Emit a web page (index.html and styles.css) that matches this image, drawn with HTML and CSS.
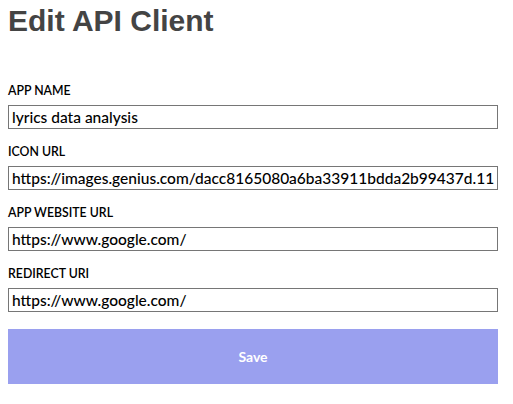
FILE: index.html
```html
<!DOCTYPE html>
<html>
<head>
<meta charset="utf-8">
<link rel="stylesheet" href="styles.css">
</head>
<body>
<h1 class="title">Edit API Client</h1>
<form class="form">
  <div class="field">
    <label class="label">APP NAME</label>
    <input class="input" type="text" value="lyrics data analysis">
  </div>
  <div class="field">
    <label class="label">ICON URL</label>
    <input class="input" type="text" value="https://images.genius.com/dacc8165080a6ba33911bdda2b99437d.1180x1180x1.png">
  </div>
  <div class="field">
    <label class="label">APP WEBSITE URL</label>
    <input class="input" type="text" value="https://www.google.com/">
  </div>
  <div class="field">
    <label class="label">REDIRECT URI</label>
    <input class="input" type="text" value="https://www.google.com/">
  </div>
  <button class="save" type="button">Save</button>
</form>
</body>
</html>
```
FILE: styles.css
```css
html, body {
  margin: 0;
  padding: 0;
  background: #fff;
}
body {
  padding: 8px;
  font-family: "Lato", "Liberation Sans", sans-serif;
  color: #000;
}
.title {
  margin: -2px 0 0;
  font-family: "Liberation Sans", Arial, sans-serif;
  font-weight: bold;
  font-size: 30px;
  line-height: 30px;
  color: #444;
}
.form {
  margin-top: 48px;
  display: flex;
  flex-direction: column;
}
.field {
  display: flex;
  flex-direction: column;
  margin-bottom: 16px;
}
.label {
  font-size: 12.3px;
  font-weight: 600;
  line-height: 14px;
  margin-bottom: 7px;
  color: #000;
}
.input {
  box-sizing: border-box;
  height: 24px;
  width: 490px;
  border: 1px solid #767676;
  border-radius: 0;
  padding: 0 3px;
  font-family: "Lato", sans-serif;
  font-size: 15.5px;
  font-weight: 500;
  color: #000;
  outline: none;
}
.save {
  margin-top: 1px;
  height: 55px;
  width: 490px;
  border: none;
  background: #9aa0ef;
  color: #fff;
  font-family: "Lato", sans-serif;
  font-weight: bold;
  font-size: 14px;
}
```
